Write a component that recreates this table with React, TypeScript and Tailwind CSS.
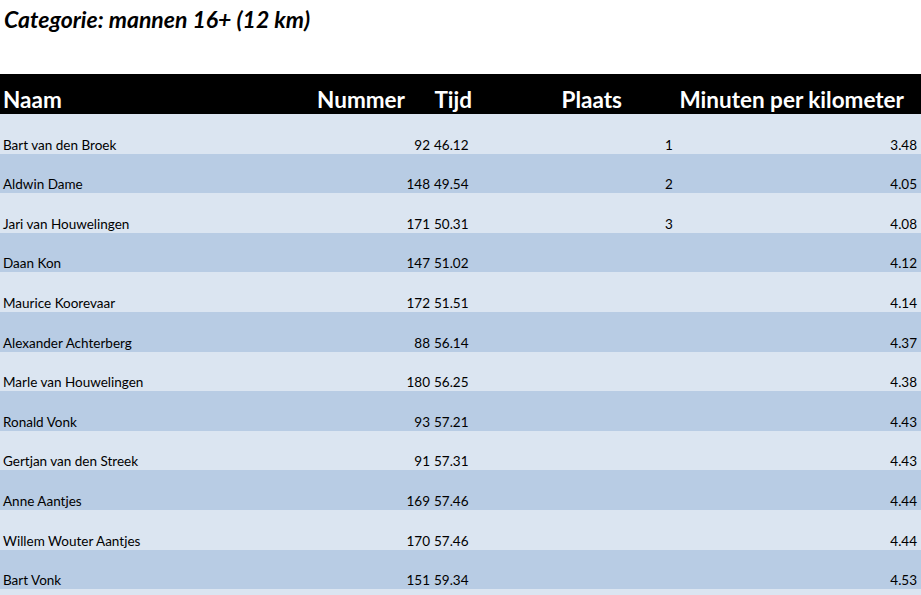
import React from 'react';

// Uitslag: categorie mannen 16+ (12 km)
interface Result {
  naam: string;
  nummer: number;
  tijd: string;
  plaats?: number;
  mpk: string;
}

const results: Result[] = [
  { naam: 'Bart van den Broek', nummer: 92, tijd: '46.12', plaats: 1, mpk: '3.48' },
  { naam: 'Aldwin Dame', nummer: 148, tijd: '49.54', plaats: 2, mpk: '4.05' },
  { naam: 'Jari van Houwelingen', nummer: 171, tijd: '50.31', plaats: 3, mpk: '4.08' },
  { naam: 'Daan Kon', nummer: 147, tijd: '51.02', mpk: '4.12' },
  { naam: 'Maurice Koorevaar', nummer: 172, tijd: '51.51', mpk: '4.14' },
  { naam: 'Alexander Achterberg', nummer: 88, tijd: '56.14', mpk: '4.37' },
  { naam: 'Marle van Houwelingen', nummer: 180, tijd: '56.25', mpk: '4.38' },
  { naam: 'Ronald Vonk', nummer: 93, tijd: '57.21', mpk: '4.43' },
  { naam: 'Gertjan van den Streek', nummer: 91, tijd: '57.31', mpk: '4.43' },
  { naam: 'Anne Aantjes', nummer: 169, tijd: '57.46', mpk: '4.44' },
  { naam: 'Willem Wouter Aantjes', nummer: 170, tijd: '57.46', mpk: '4.44' },
  { naam: 'Bart Vonk', nummer: 151, tijd: '59.34', mpk: '4.53' },
];

export default function App() {
  return (
    <div className="w-[921px] h-[595px] overflow-hidden bg-white text-black font-['Lato','Liberation_Sans',sans-serif]">
      {/* Titel */}
      <div className="h-[74px] pl-[4px] pt-[5px]">
        <h1 className="text-[23px] font-bold italic leading-[28px]">Categorie: mannen 16+ (12 km)</h1>
      </div>

      {/* Kop */}
      <div className="h-[40px] bg-black text-white text-[22.5px] font-bold flex items-end pb-[1px] leading-[26px]">
        <div className="w-[300px] pl-[3px]">Naam</div>
        <div className="w-[105px] text-right">Nummer</div>
        <div className="w-[67px] text-right">Tijd</div>
        <div className="w-[150px] text-right">Plaats</div>
        <div className="w-[282px] text-right">Minuten per kilometer</div>
      </div>

      {/* Rijen */}
      {[...results, null].map((r, i) => (
        <div
          key={i}
          className={`h-[39.6px] flex items-end text-[13.5px] leading-[18px] ${i % 2 === 0 ? 'bg-[#dbe5f1]' : 'bg-[#b8cce4]'}`}
        >
          {r && (
            <>
              <div className="w-[310px] pl-[3px]">{r.naam}</div>
              <div className="w-[120px] text-right">{r.nummer}</div>
              <div className="w-[232px] pl-[4px]">{r.tijd}</div>
              <div className="w-[100px] pl-[3px]">{r.plaats ?? ''}</div>
              <div className="flex-1 text-right pr-[4px]">{r.mpk}</div>
            </>
          )}
        </div>
      ))}
    </div>
  );
}
